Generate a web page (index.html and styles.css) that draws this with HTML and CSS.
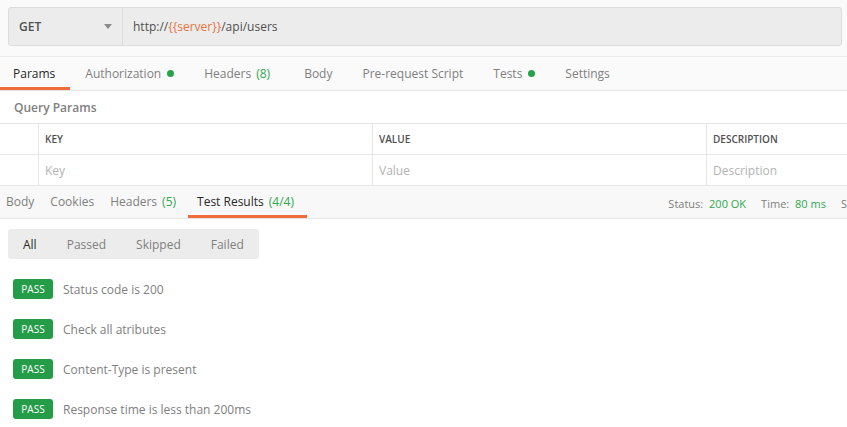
FILE: index.html
```html
<!DOCTYPE html>
<html>
<head>
<meta charset="utf-8">
<link rel="stylesheet" href="styles.css">
</head>
<body>
<div class="top">
  <div class="urlbar">
    <div class="method"><span>GET</span><span class="caret"></span></div>
    <div class="url">http://<span class="var">{{server}}</span>/api/users</div>
  </div>
</div>
<div class="tabs">
  <div class="tab active">Params</div>
  <div class="tab">Authorization <span class="dot"></span></div>
  <div class="tab tab-count">Headers <span class="count">(8)</span></div>
  <div class="tab">Body</div>
  <div class="tab">Pre-request Script</div>
  <div class="tab">Tests <span class="dot"></span></div>
  <div class="tab">Settings</div>
</div>
<div class="section-title">Query Params</div>
<div class="table">
  <div class="row head">
    <div class="cell chk"></div>
    <div class="cell key">KEY</div>
    <div class="cell val">VALUE</div>
    <div class="cell desc">DESCRIPTION</div>
  </div>
  <div class="row">
    <div class="cell chk"></div>
    <div class="cell key ph">Key</div>
    <div class="cell val ph">Value</div>
    <div class="cell desc ph">Description</div>
  </div>
</div>
<div class="resbar">
  <div class="rtab">Body</div>
  <div class="rtab">Cookies</div>
  <div class="rtab">Headers <span class="count">(5)</span></div>
  <div class="rtab active">Test Results <span class="count">(4/4)</span></div>
  <div class="meta">
    <span class="mi">Status: <span class="ok">200 OK</span></span>
    <span class="mi">Time: <span class="ok">80 ms</span></span>
    <span class="mi">Size: <span class="ok">1.2 KB</span></span>
  </div>
</div>
<div class="filters">
  <div class="fbtn active">All</div>
  <div class="fbtn">Passed</div>
  <div class="fbtn">Skipped</div>
  <div class="fbtn">Failed</div>
</div>
<div class="tests">
  <div class="test"><span class="badge">PASS</span><span class="tname">Status code is 200</span></div>
  <div class="test"><span class="badge">PASS</span><span class="tname">Check all atributes</span></div>
  <div class="test"><span class="badge">PASS</span><span class="tname">Content-Type is present</span></div>
  <div class="test"><span class="badge">PASS</span><span class="tname">Response time is less than 200ms</span></div>
</div>
</body>
</html>
```
FILE: styles.css
```css
html, body {
  margin: 0;
  padding: 0;
}
body {
  font-family: "Open Sans", "Noto Sans", sans-serif;
  font-size: 12px;
  color: #808080;
  background: #ffffff;
  width: 847px;
  height: 427px;
  overflow: hidden;
}
.top {
  background: #fafafa;
  padding: 7px 5px 10px 8px;
  border-bottom: 1px solid #ededed;
}
.urlbar {
  display: flex;
  height: 37px;
  background: #ececec;
  border: 1px solid #dcdcdc;
  border-radius: 3px;
}
.method {
  width: 114px;
  display: flex;
  align-items: center;
  justify-content: space-between;
  padding: 0 10px 0 10px;
  box-sizing: border-box;
  border-right: 1px solid #dcdcdc;
  color: #505050;
  font-weight: 600;
  font-size: 12px;
}
.caret {
  width: 0;
  height: 0;
  border-left: 4px solid transparent;
  border-right: 4px solid transparent;
  border-top: 5px solid #8a8a8a;
}
.url {
  display: flex;
  align-items: center;
  padding-left: 10px;
  color: #505050;
  font-size: 12px;
}
.var {
  color: #e8733e;
}
.tabs {
  display: flex;
  height: 33px;
  border-bottom: 1px solid #e6e6e6;
  background: #fafafa;
}
.tab {
  display: flex;
  align-items: center;
  padding: 2px 15px 0;
  color: #808080;
  font-size: 12px;
  box-sizing: border-box;
  border-bottom: 3px solid transparent;
}
.tab:first-child {
  padding-left: 13px;
}
.tab.tab-count {
  padding-right: 19px;
}
.tab.active {
  color: #282828;
  border-bottom-color: #f26b3a;
}
.dot {
  display: inline-block;
  width: 7px;
  height: 7px;
  border-radius: 50%;
  background: #26a24b;
  margin-left: 6px;
}
.count {
  color: #2fa84f;
  margin-left: 5px;
}
.section-title {
  height: 32px;
  display: flex;
  align-items: center;
  padding-left: 14px;
  padding-top: 1px;
  box-sizing: border-box;
  color: #808080;
  font-weight: 600;
  font-size: 12px;
  background: #fff;
}
.table {
  border-top: 1px solid #e6e6e6;
}
.row {
  display: flex;
  height: 30px;
  border-bottom: 1px solid #e6e6e6;
}
.cell {
  display: flex;
  align-items: center;
  padding-left: 6px;
  box-sizing: border-box;
  border-right: 1px solid #e6e6e6;
}
.cell.chk {
  width: 39px;
  padding: 0;
}
.cell.key, .cell.val {
  width: 334px;
}
.cell.desc {
  flex: 1;
  border-right: none;
}
.row.head .cell {
  color: #505050;
  font-weight: 600;
  font-size: 10px;
}
.ph {
  color: #b3b3b3;
}
.resbar {
  display: flex;
  height: 32px;
  background: #f8f8f8;
  border-bottom: 1px solid #e6e6e6;
}
.rtab {
  display: flex;
  align-items: center;
  padding: 2px 8px 0;
  box-sizing: border-box;
  border-bottom: 3px solid transparent;
  color: #808080;
}
.rtab:first-child {
  padding-left: 6px;
}
.rtab.active {
  color: #282828;
  border-bottom-color: #f26b3a;
  padding: 2px 13px 0 9px;
  margin-left: 4px;
}
.meta {
  margin-left: auto;
  display: flex;
  align-items: center;
  gap: 15px;
  font-size: 11px;
  color: #808080;
  margin-right: -55px;
  padding-top: 2px;
}
.ok {
  color: #2fa84f;
  margin-left: 3px;
}
.filters {
  display: inline-flex;
  margin: 10px 0 0 8px;
  height: 30px;
  background: #ececec;
  border-radius: 3px;
}
.fbtn {
  display: flex;
  align-items: center;
  padding: 0 15px;
  color: #808080;
}
.fbtn.active {
  color: #282828;
}
.tests {
  padding: 20px 0 0 13px;
  display: flex;
  flex-direction: column;
  gap: 20px;
}
.test {
  display: flex;
  align-items: center;
  height: 20px;
}
.badge {
  width: 40px;
  height: 20px;
  background: #249c48;
  color: #fff;
  border-radius: 3px;
  font-size: 10px;
  display: flex;
  align-items: center;
  justify-content: center;
  margin-right: 10px;
}
.tname {
  color: #808080;
}
```
